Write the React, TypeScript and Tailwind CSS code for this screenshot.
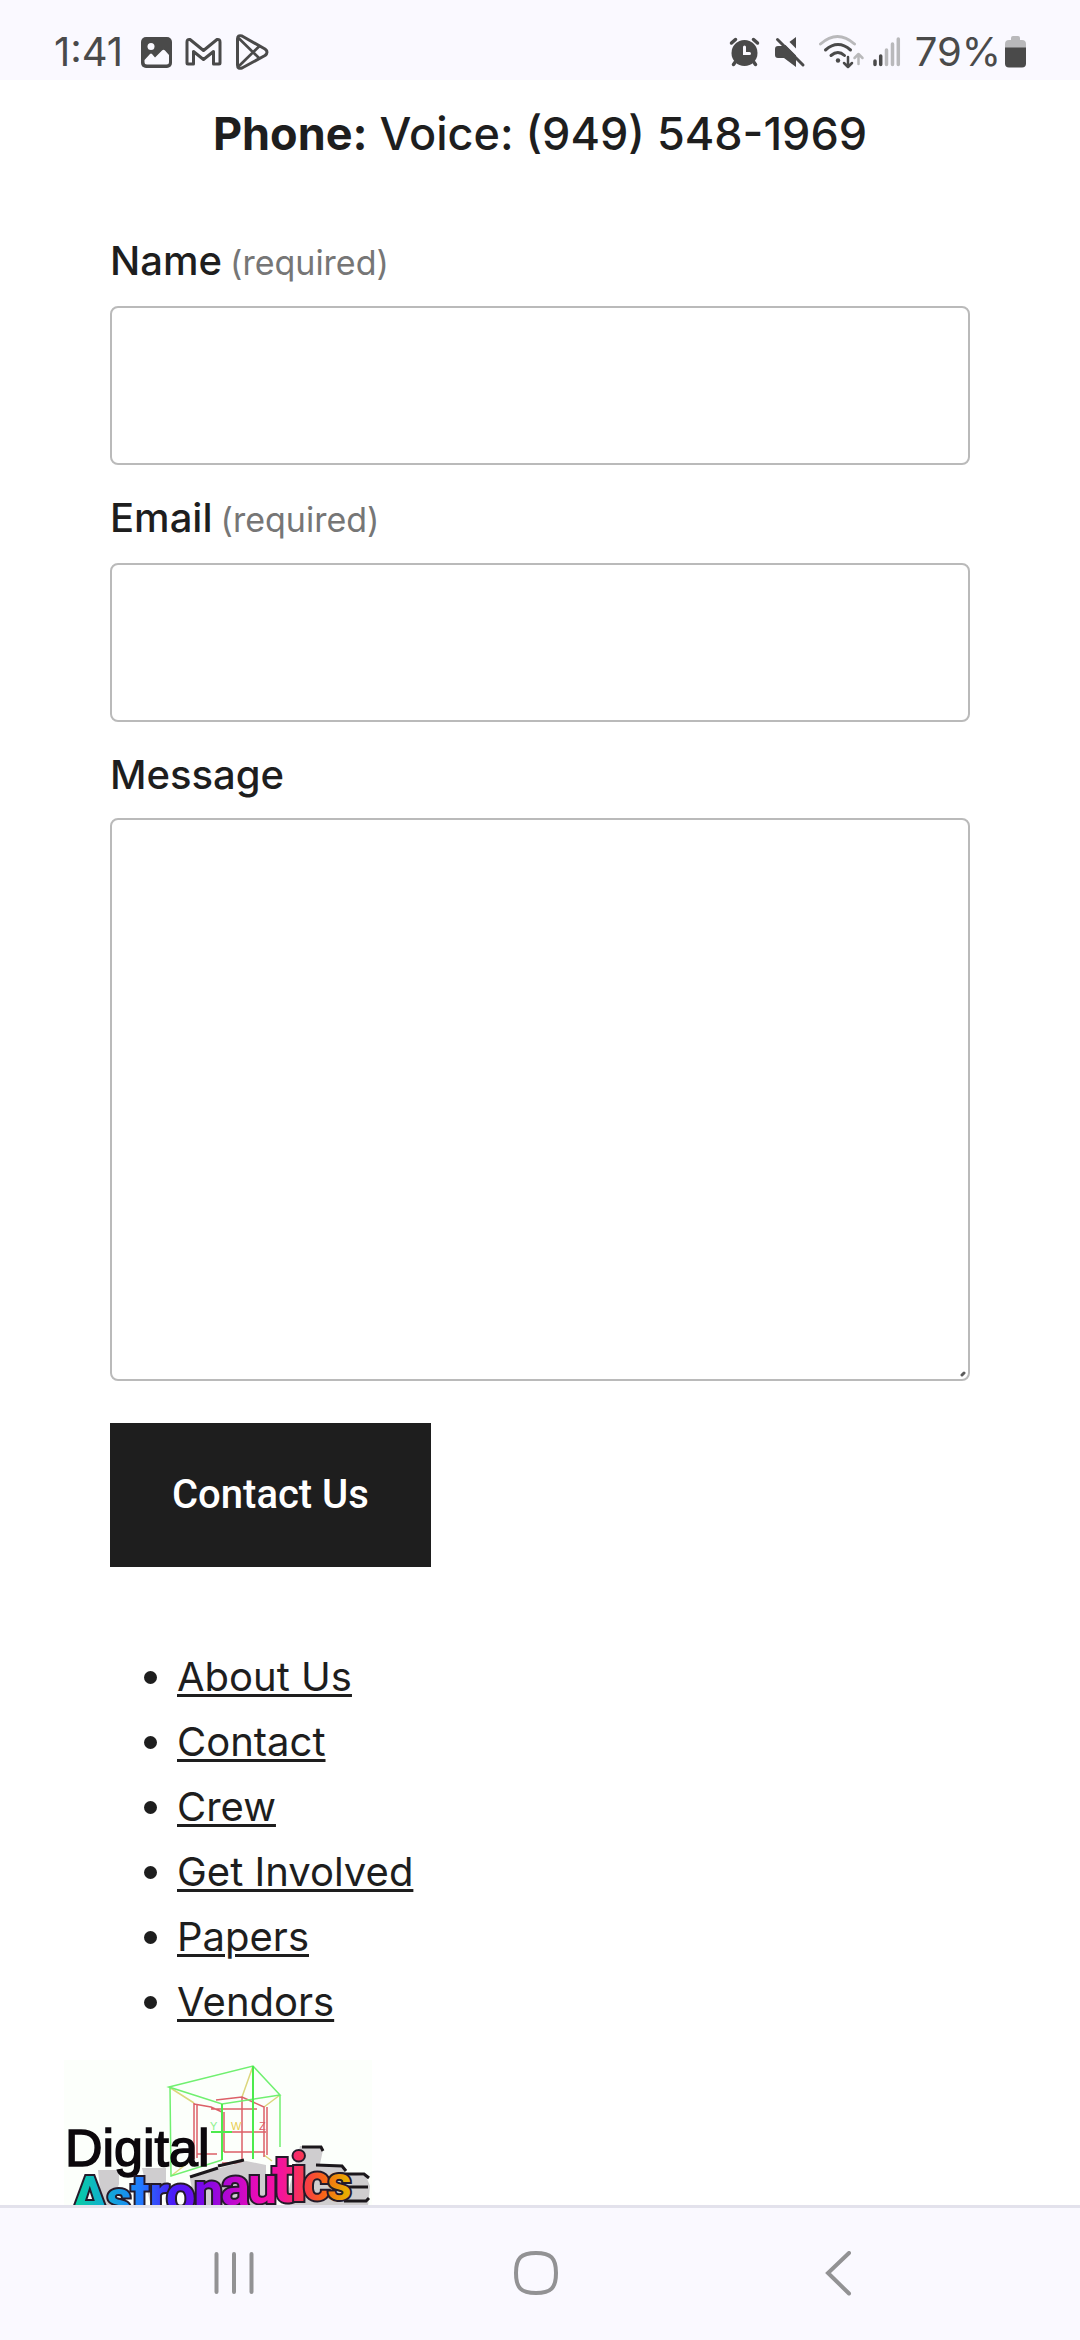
import type { ReactNode } from 'react';

const LINKS = ['About Us', 'Contact', 'Crew', 'Get Involved', 'Papers', 'Vendors'];

const DARK = '#4a4a4a';
const FAINT = '#b9b9bb';
const BAR_BG = '#faf9ff';

const LETTERS = [
  { char: 'A', x: 7, y: 156, size: 56 },
  { char: 's', x: 42, y: 156, size: 50 },
  { char: 't', x: 67, y: 154, size: 56 },
  { char: 'r', x: 85, y: 154, size: 56 },
  { char: 'o', x: 102, y: 152, size: 52 },
  { char: 'n', x: 130, y: 149, size: 52 },
  { char: 'a', x: 157, y: 145, size: 54 },
  { char: 'u', x: 184, y: 143, size: 52 },
  { char: 't', x: 208, y: 142, size: 66 },
  { char: 'i', x: 226, y: 141, size: 66 },
  { char: 'c', x: 239, y: 140, size: 52 },
  { char: 's', x: 263, y: 140, size: 48 },
];

const WORD_COLORS = [
  { offset: '0%', color: '#08cfa0' },
  { offset: '13%', color: '#12a8d8' },
  { offset: '24%', color: '#1f7dff' },
  { offset: '36%', color: '#4a1cf8' },
  { offset: '47%', color: '#7a08e8' },
  { offset: '57%', color: '#b808d0' },
  { offset: '68%', color: '#ee0cb4' },
  { offset: '76%', color: '#f4149a' },
  { offset: '84%', color: '#f83a4c' },
  { offset: '91%', color: '#f86418' },
  { offset: '100%', color: '#e8b000' },
];

function StatusIcons() {
  return (
    <div className="ml-auto flex items-center gap-2">
      {/* alarm */}
      <svg width="37" height="36" viewBox="731 34 37 36" fill="none" stroke={DARK} strokeWidth="3.5" strokeLinecap="round">
        <circle cx="746.5" cy="53" r="13" fill={DARK} stroke="none" />
        <path d="M733.5 43l4-3.500M755.500 39.500l4 3.500M738 61l-2.500 3.500M755 61l2.500 3.500" />
        <path d="M746.500 47v6.500h5" stroke={BAR_BG} strokeWidth="3" />
      </svg>
      {/* sound off */}
      <svg width="37" height="36" viewBox="776 34 37 36">
        <path d="M780 46h6l12-9v30l-12-9h-6q-3 0-3-3v-6q0-3 3-3z" fill={DARK} />
        <path d="M782 36l27 27" stroke={BAR_BG} strokeWidth="5" />
        <path d="M779.500 39.500l25.500 25.500" stroke={DARK} strokeWidth="3" strokeLinecap="round" />
      </svg>
      {/* wifi */}
      <svg width="46" height="36" viewBox="821 34 46 36" fill="none" stroke={DARK} strokeWidth="3" strokeLinecap="round" strokeLinejoin="round">
        <path d="M822.500 44q17-15 34 0" stroke={FAINT} />
        <path d="M827.500 50q12.500-11 25 0M833 55.500q7-6 13.500 0" />
        <circle cx="840" cy="60.500" r="2.200" fill={DARK} stroke="none" />
        <path d="M850 57v9.500M846 63l4 4 4-4" strokeWidth="2.500" />
        <path d="M860.500 64v-9.500M856.500 58l4-4 4 4" stroke={FAINT} strokeWidth="2.500" />
      </svg>
      {/* mobile signal */}
      <svg width="34" height="36" viewBox="875 34 34 36" strokeWidth="3.500" strokeLinecap="round">
        <path d="M877 61v3.500M882.700 56v8.500" stroke={DARK} />
        <path d="M888.500 50v14.500M894.500 44v20.500M900.300 39v25.500" stroke={FAINT} />
      </svg>
      <div className="flex items-center gap-1">
        <span>79%</span>
        <svg width="21" height="36" viewBox="1005 34 21 36">
          <path d="M1011 40v-2q0-2 2-2h5q2 0 2 2v2h2q4 0 4 4v4h-21v-4q0-4 4-4z" fill={FAINT} />
          <path d="M1005 47.500h21v16q0 4-4 4h-13q-4 0-4-4z" fill={DARK} />
        </svg>
      </div>
    </div>
  );
}

function NotificationIcons() {
  return (
    <div className="ml-[18px] flex items-center gap-[13px]">
      {/* gallery */}
      <svg width="31" height="36" viewBox="141 34 31 36">
        <rect x="141" y="37" width="31" height="31" rx="5" fill={DARK} />
        <circle cx="151" cy="46.500" r="3.500" fill={BAR_BG} />
        <path d="M144.500 60l5.500-6q1-1 2 0l3 3.500 7-7q1.500-1.500 3 0l4 4.500v7q0 2.500-2.500 2.500h-19.500q-2.500 0-2.500-2.500z" fill={BAR_BG} />
      </svg>
      {/* mail */}
      <svg width="37" height="36" viewBox="185 34 37 36">
        <path
          d="M187 63V42q0-3 3-2.500l13.500 11 13.500-11q3-.5 3 2.500v21q0 1-1 1h-5.500V51.500l-10 8-10-8V64h-5.500q-1 0-1-1z"
          fill="none"
          stroke={DARK}
          strokeWidth="3"
          strokeLinejoin="round"
        />
      </svg>
      {/* play store */}
      <svg width="35" height="36" viewBox="236 34 35 36" fill="none" stroke={DARK} strokeLinejoin="round">
        <path d="M238.500 39q0-4.500 4.500-3l23 13q4 3 0 6.500l-23 12.500q-4.500 1.500-4.500-3z" strokeWidth="3" />
        <path d="M239.500 38l21 20.500M239.500 66.500l21-20.500" strokeWidth="2.700" />
      </svg>
    </div>
  );
}

function AstronauticsLogo() {
  return (
    <svg className="mt-[26px]" width="308" height="200" viewBox="0 0 308 200" role="img" aria-label="Digital Astronautics">
      <defs>
        <linearGradient id="word" gradientUnits="userSpaceOnUse" x1="10" y1="130" x2="284" y2="134">
          {WORD_COLORS.map((c) => (
            <stop key={c.offset} offset={c.offset} stopColor={c.color} />
          ))}
        </linearGradient>
      </defs>
      <rect width="308" height="200" fill="#fcfffb" />
      {/* tesseract */}
      <g fill="none" strokeWidth="1.500">
        <path d="M105 27L130 43M189 6L178 37M216 35L200 47M130 98l-23 18M200 95l8 6" stroke="#dcd67c" />
        <path d="M130 43v56M133 44v54M130 44l17 3 11 5M152 40l26-3 22 10v50M203 47v48M178 37v66M160 52v40M147 49h46M133 94h20M160 92h41M158 103h20M168 72h34" stroke="#dc6068" />
        <path d="M105 27L189 6 216 35 158 44zM106 27l1 89 51-16M216 35v52" stroke="#70f070" />
        <path d="M189 6v93M158 44v56M147 72h21" stroke="#4cea4c" strokeWidth="2" />
      </g>
      <g fontSize="11" fontFamily="Liberation Sans, sans-serif">
        <text x="146" y="70" fill="#8cf08c">Y</text>
        <text x="167" y="70" fill="#e8cc50">W</text>
        <text x="195" y="70" fill="#dc6068">Z</text>
      </g>
      {/* extruded sides of the wordmark */}
      <g fill="#cfcdcf">
        <path d="M34 110h21v14l-8 24H38zM78 108h24v14l-16 20zM236 86h20l3 4-3 14 22 2 4 8 20 2 4 10-2 20-24 2h-60z" />
        <path d="M126 119l26-10 30-8 20 4v43h-70z" />
      </g>
      <path
        d="M126 117l28-9M154 106l26-6M238 87h19l2 4M252 105l26 1 4 5M276 114h24l5 4M282 127h22M280 141h22l3-3"
        fill="none"
        stroke="#1b171b"
        strokeWidth="3"
      />
      <text x="1" y="106" fontSize="52" fill="#0c080c" stroke="#0c080c" strokeWidth="1.500" fontFamily="Liberation Sans, sans-serif">
        Digital
      </text>
      <text
        fontFamily="Roboto, sans-serif"
        fontWeight="700"
        fill="url(#word)"
        stroke="#241a2a"
        strokeWidth="4"
        paintOrder="stroke"
      >
        {LETTERS.map((l) => (
          <tspan key={l.x} x={l.x} y={l.y} fontSize={l.size}>
            {l.char}
          </tspan>
        ))}
      </text>
    </svg>
  );
}

function Field({ id, label, required, children }: { id: string; label: string; required?: boolean; children: ReactNode }) {
  return (
    <div className="flex flex-col">
      <label htmlFor={id} className="mb-[14px] text-[40px] leading-[58px] font-medium">
        {label}
        {required && <span className="ml-2 text-[34px] font-normal text-[#767676]">(required)</span>}
      </label>
      {children}
    </div>
  );
}

export default function App() {
  return (
    <div className="flex h-screen flex-col bg-white font-['Inter',sans-serif] text-[#1e1e1e]">
      <header className="flex h-20 shrink-0 items-center bg-[#faf9ff] px-[54px] pt-6 text-[40px] leading-14 text-[#4a4a4a]">
        <span>1:41</span>
        <NotificationIcons />
        <StatusIcons />
      </header>

      <main className="flex-1 overflow-hidden px-16">
        <p className="mt-5 text-center text-[45px] leading-[68px] font-medium">
          <b>Phone:</b> Voice: (949) 548-1969
        </p>

        <form className="mx-[46px] mt-16 flex flex-col gap-6" onSubmit={(e) => e.preventDefault()}>
          <Field id="name" label="Name" required>
            <input id="name" type="text" required className="h-[159px] rounded-lg border-2 border-[#bababa] px-8 text-[40px] shadow-none" />
          </Field>
          <Field id="email" label="Email" required>
            <input id="email" type="email" required className="h-[159px] rounded-lg border-2 border-[#bababa] px-8 text-[40px] shadow-none" />
          </Field>
          <Field id="message" label="Message">
            <div className="relative flex">
              <textarea id="message" className="h-[563px] w-full resize-none rounded-lg border-2 border-[#bababa] p-8 text-[40px]" />
              <svg className="absolute right-1 bottom-1" width="6" height="6" viewBox="0 0 6 6">
                <path d="M2 4l2-2" stroke="#5c5c5c" strokeWidth="3" strokeLinecap="round" />
              </svg>
            </div>
          </Field>
          <button type="submit" className="mt-[18px] self-start bg-[#1e1e1e] px-[62px] py-11 font-['Roboto',sans-serif] text-[40px] leading-14 font-medium text-white">
            Contact Us
          </button>
        </form>

        <ul className="mt-[77px] list-disc pl-[113px] text-[40px] leading-[65px]">
          {LINKS.map((link) => (
            <li key={link}>
              <a href="#" className="underline decoration-3 underline-offset-3">
                {link}
              </a>
            </li>
          ))}
        </ul>

        <AstronauticsLogo />
      </main>

      <footer className="flex h-[135px] shrink-0 border-t-3 border-[#e3e2ec] bg-[#faf9ff] pr-[91px] pl-[83px]">
        <button aria-label="Recent apps" className="flex flex-1 items-center justify-center">
          <svg width="40" height="46" viewBox="0 0 40 46" stroke="#929294" strokeWidth="4" strokeLinecap="round">
            <path d="M2.500 3v38M20 3v38M37.500 3v38" />
          </svg>
        </button>
        <button aria-label="Home" className="flex flex-1 items-center justify-center">
          <svg width="46" height="46" viewBox="0 0 46 46" fill="none" stroke="#929294" strokeWidth="4">
            <path d="M23 2c15 0 20 5 20 20s-5 20-20 20S3 37 3 22 8 2 23 2z" />
          </svg>
        </button>
        <button aria-label="Back" className="flex flex-1 items-center justify-center">
          <svg width="28" height="46" viewBox="0 0 28 46" fill="none" stroke="#929294" strokeWidth="4" strokeLinecap="round">
            <path d="M25 2L4 22l21 20.500" />
          </svg>
        </button>
      </footer>
    </div>
  );
}
